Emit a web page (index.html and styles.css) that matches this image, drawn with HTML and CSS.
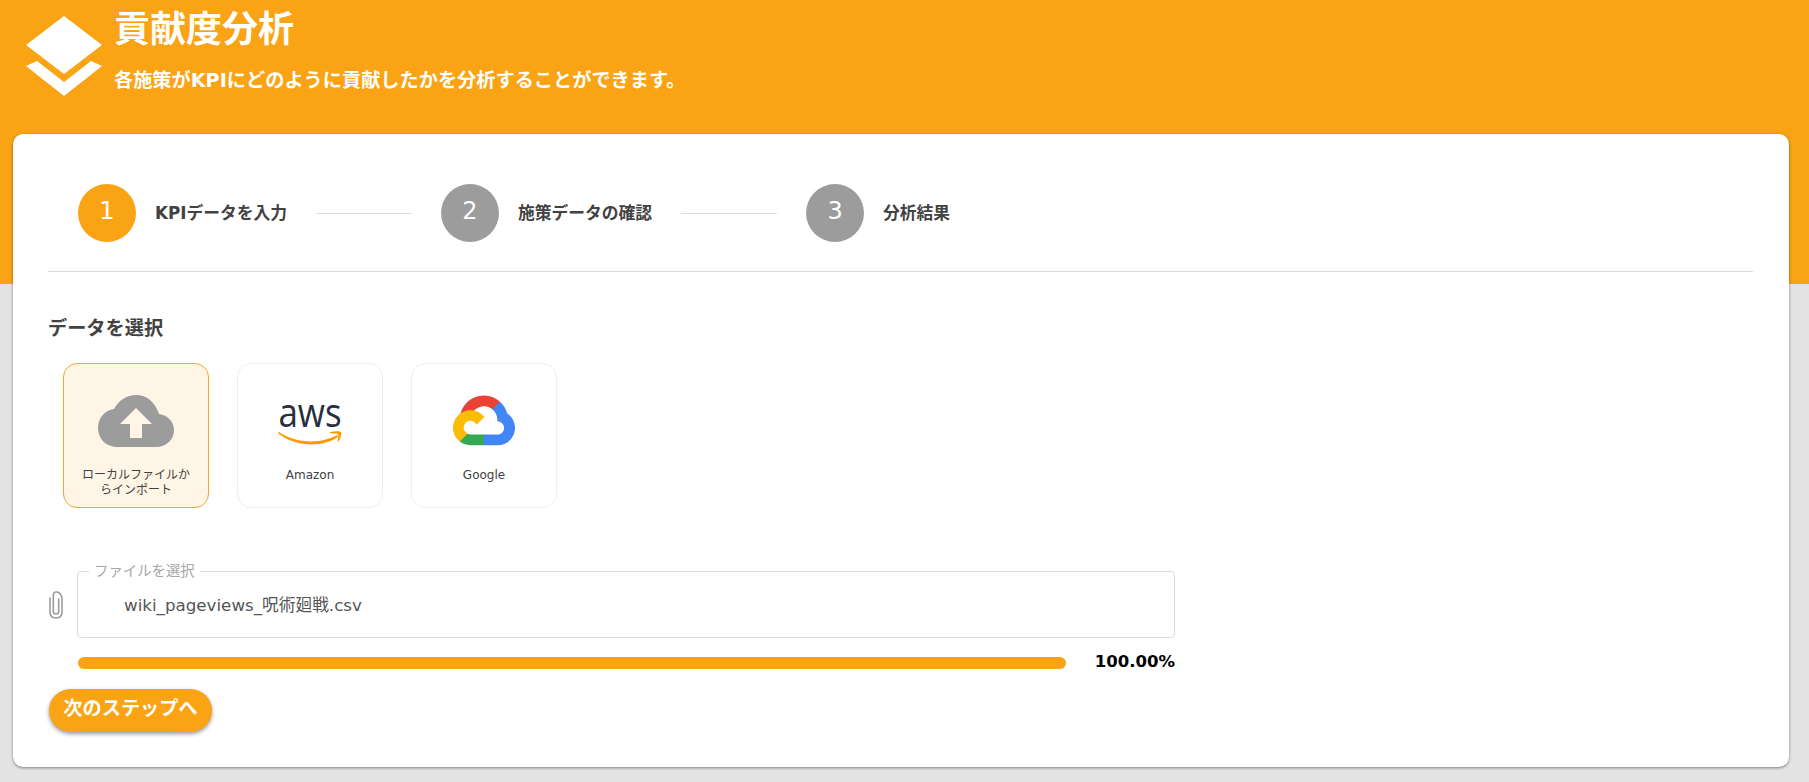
FILE: index.html
```html
<!DOCTYPE html>
<html lang="ja">
<head>
<meta charset="utf-8">
<title>貢献度分析</title>
<link rel="stylesheet" href="styles.css">
</head>
<body>
<header class="hero">
  <svg class="hero-logo" viewBox="0 0 76 80" aria-hidden="true">
    <path fill="#fff" d="M38 0 76 29 38 58 0 29Z"/>
    <path fill="#fff" d="M11 45 38 66 65 45 76 50 38 80 0 50Z"/>
  </svg>
  <div class="hero-text">
    <h1 class="hero-title">貢献度分析</h1>
    <p class="hero-sub">各施策がKPIにどのように貢献したかを分析することができます。</p>
  </div>
</header>
<main class="card">
  <ol class="stepper">
    <li class="step step-active"><span class="step-num">1</span><span class="step-label">KPIデータを入力</span></li>
    <li class="step-line"></li>
    <li class="step"><span class="step-num">2</span><span class="step-label">施策データの確認</span></li>
    <li class="step-line"></li>
    <li class="step"><span class="step-num">3</span><span class="step-label">分析結果</span></li>
  </ol>
  <h2 class="section-title">データを選択</h2>
  <div class="sources">
    <div class="source source-active">
      <svg class="icon-cloud" viewBox="0 0 76 52" aria-hidden="true">
        <path fill="#9c9c9c" fill-rule="evenodd" d="M20 52C8 52 0 44 0 33 0 23 7 15 16 14 21 5 29 0 38 0 49 0 57 7 61 19 70 20 76 27 76 35 76 45 68 52 58 52ZM38 13 22 29H32V43H44V29H54Z"/>
      </svg>
      <span class="source-label">ローカルファイルからインポート</span>
    </div>
    <div class="source">
      <svg class="icon-aws" viewBox="0 0 64 41" aria-hidden="true">
        <text class="aws-text" x="32" y="19" text-anchor="middle" transform="scale(1 1.16)">aws</text>
        <path fill="#f90" d="M1 27C18 39 44 39 59 30L60 32C44 43 16 42 0 28Z"/>
        <path fill="#f90" d="M52 27C56 26 62 26 63 27 64 29 62 35 60 37 59 37 61 31 60 29 59 28 55 29 52 28Z"/>
      </svg>
      <span class="source-label">Amazon</span>
    </div>
    <div class="source">
      <svg class="icon-gcp" viewBox="0 0 256 206" aria-hidden="true">
        <path fill="#ea4335" d="M170.3 56.8 192.500 34.600 194 25.200C153.400-11.600 88.900-7.400 52.300 34.100 42.100 45.600 34.600 60 30.600 74.900L38.600 73.800 83.100 66.500 86.500 63C106.300 40.500 139.500 37.500 162.600 56.200Z"/>
        <path fill="#4285f4" d="M224.2 73.900C219.100 55.100 208.600 38.200 194 25.200L162.800 56.400C176 67.200 183.500 83.400 183.200 100.400V105.900C198.500 105.900 211 118.300 211 133.700 211 149 198.600 161.200 183.200 161.200H127.600L122.100 166.800V200.100L127.600 205.600H183.200C223.100 205.900 255.700 174.100 256 134.200 256.200 110 244.300 87.300 224.200 73.900Z"/>
        <path fill="#34a853" d="M71.800 204.800H127.300V160.300H71.800C67.800 160.300 64 159.400 60.400 157.800L52.500 160.300 30.100 182.500 28.100 190.100C40.700 199.600 56 204.900 71.800 204.800Z"/>
        <path fill="#fbbc05" d="M71.800 60.400C31.900 60.600-.2 93.200 0 133.100.1 155.400 10.500 176.400 28.200 189.900L60.400 157.700C46.400 151.400 40.200 134.900 46.500 120.900 52.800 106.900 69.300 100.700 83.300 107 89.500 109.800 94.400 114.700 97.200 120.900L129.400 88.700C115.700 70.900 94.400 60.300 71.800 60.400Z"/>
      </svg>
      <span class="source-label">Google</span>
    </div>
  </div>
  <div class="file-row">
    <svg class="icon-clip" viewBox="0 0 14 28" aria-hidden="true">
      <path fill="none" stroke="#9c9c9c" stroke-width="1.600" stroke-linecap="round" d="M9.700 8V20.500C9.700 22.200 8.700 23 7 23S4.300 22.200 4.300 20.500V5C4.300 2.500 5.300 1 7 1S9.700 1 10.500 2 13 5 13 8V21C13 25 10.500 27 7 27S1 25 1 21V7"/>
    </svg>
    <fieldset class="file-field">
      <legend class="file-legend">ファイルを選択</legend>
      <span class="file-value">wiki_pageviews_呪術廻戦.csv</span>
    </fieldset>
  </div>
  <div class="progress-row">
    <div class="progress-bar"></div>
    <span class="progress-value">100.00%</span>
  </div>
  <button class="next-btn" type="button">次のステップへ</button>
</main>
</body>
</html>
```
FILE: styles.css
```css
* { box-sizing: border-box; }
html, body { height: 100%; }
body {
  margin: 0;
  overflow: hidden;
  background: linear-gradient(#faa314 284px, #e3e3e3 284px);
  font-family: "DejaVu Sans", "Noto Sans CJK JP", sans-serif;
  color: #424242;
}
.hero {
  display: flex;
  height: 134px;
  padding: 16px 0 0 26px;
  gap: 12px;
}
.hero-logo { width: 76px; height: 80px; flex: none; }
.hero-text { color: #fff; margin-top: -11px; }
.hero-title { margin: 0; font-size: 36px; line-height: 50px; font-weight: 700; }
.hero-sub { margin: 13px 0 0; font-size: 19.2px; line-height: 26px; font-weight: 700; }
.card {
  margin-left: 13px;
  width: 1776px;
  height: 633px;
  padding: 50px 36px 0 35px;
  background: #fff;
  border-radius: 10px;
  box-shadow: 0 1px 3px rgba(0, 0, 0, .45);
}
.stepper {
  display: flex;
  align-items: center;
  list-style: none;
  margin: 0;
  padding: 0 0 29px 30px;
  border-bottom: 1px solid #dcdcdc;
}
.step { display: flex; align-items: center; gap: 19px; }
.step-num {
  display: flex;
  align-items: center;
  justify-content: center;
  width: 58px;
  height: 58px;
  padding-bottom: 4px;
  border-radius: 50%;
  background: #9c9c9c;
  color: #fff;
  font-size: 24px;
  font-weight: 400;
}
.step-active .step-num { background: #faa314; }
.step-label { padding-bottom: 3px; font-size: 16.75px; font-weight: 700; white-space: nowrap; }
.step-line { width: 96px; height: 1px; margin: 0 29px; background: #dcdcdc; }
.section-title { margin: 43px 0 0; font-size: 19.2px; line-height: 28px; font-weight: 700; }
.sources { display: flex; gap: 28px; margin: 20px 0 0 15px; }
.source {
  display: flex;
  flex-direction: column;
  align-items: center;
  width: 146px;
  height: 145px;
  padding-top: 31px;
  border: 1px solid #eee;
  border-radius: 14px;
  background: #fff;
}
.source-active { border-color: #f6a730; background: #fff5e6; }
.source-label {
  margin-top: 21px;
  padding: 0 14px;
  font-size: 12px;
  line-height: 15px;
  text-align: center;
}
.icon-cloud { width: 76px; height: 52px; flex: none; }
.icon-aws { width: 64px; height: 41px; margin-top: 10px; margin-bottom: 1px; flex: none; overflow: visible; }
.icon-gcp { width: 62px; height: 51px; flex: none; margin-bottom: 1px; }
.aws-text { font-family: "Open Sans", sans-serif; font-size: 35px; font-weight: 500; fill: #252f3e; }
.file-row { display: flex; align-items: center; margin-top: 55px; }
.icon-clip { width: 14px; height: 28px; flex: none; margin: 8px 14px 0 1px; }
.file-field {
  width: 1098px;
  height: 75px;
  margin: 0;
  padding: 14px 0 0 46px;
  border: 1px solid #dcdcdc;
  border-radius: 4px;
}
.file-legend { margin-left: -35px; padding: 0 5px; font-size: 14.4px; color: #a6a6a6; line-height: 16px; }
.file-value { font-size: 16.7px; line-height: 24px; color: #555; }
.progress-row { display: flex; align-items: center; margin: 12px 0 0 30px; width: 1097px; justify-content: space-between; }
.progress-bar { width: 988px; height: 12px; border-radius: 6px; background: #faa314; }
.progress-value { padding-bottom: 2px; font-size: 16.5px; line-height: 24px; font-weight: 700; color: #000; }
.next-btn {
  display: block;
  width: 163px;
  height: 43px;
  margin: 13px 0 0 1px;
  padding: 0 0 7px;
  border: 0;
  border-radius: 22px;
  background: #faa314;
  color: #fff;
  font: 700 19.2px/24px "Noto Sans CJK JP", sans-serif;
  box-shadow: 0 2px 4px rgba(0, 0, 0, .4);
}
```
